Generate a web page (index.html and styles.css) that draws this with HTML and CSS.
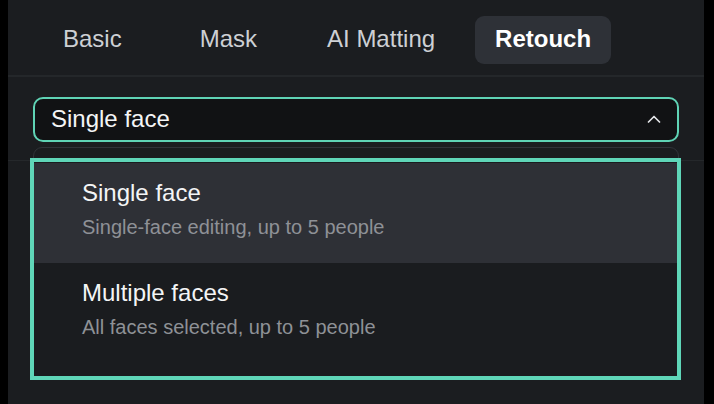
FILE: index.html
```html
<!DOCTYPE html>
<html>
<head>
<meta charset="utf-8">
<link rel="stylesheet" href="styles.css">
</head>
<body>
<div class="panel">
  <div class="tabs">
    <div class="tab tab-basic">Basic</div>
    <div class="tab tab-mask">Mask</div>
    <div class="tab tab-matting">AI Matting</div>
    <div class="tab active">Retouch</div>
  </div>
  <div class="select-area">
    <div class="select">
      <span class="select-value">Single face</span>
      <svg class="chevron" width="14" height="8" viewBox="0 0 14 8"><path d="M1.5 7 L7 1.5 L12.5 7" fill="none" stroke="#e2e4e7" stroke-width="1.7" stroke-linecap="round" stroke-linejoin="round"/></svg>
    </div>
  </div>
  <div class="popup">
    <div class="list">
      <div class="item selected">
        <div class="item-title">Single face</div>
        <div class="item-sub">Single-face editing, up to 5 people</div>
      </div>
      <div class="item">
        <div class="item-title">Multiple faces</div>
        <div class="item-sub">All faces selected, up to 5 people</div>
      </div>
    </div>
  </div>
</div>
</body>
</html>
```
FILE: styles.css
```css
html, body {
  margin: 0;
  padding: 0;
  background: #000;
}
body {
  font-family: "Liberation Sans", Arial, sans-serif;
  width: 714px;
  height: 404px;
  overflow: hidden;
}
.panel {
  position: relative;
  margin-left: 8px;
  width: 696px;
  height: 404px;
  background: #1b1d20;
}
.tabs {
  display: flex;
  align-items: flex-start;
  height: 59px;
  padding: 16px 0 0 35px;
  border-bottom: 2px solid #24272a;
}
.tab {
  height: 48px;
  padding: 0 20px;
  display: flex;
  align-items: center;
  font-size: 24px;
  color: #cdd0d4;
  border-radius: 9px;
  padding-bottom: 2px;
  box-sizing: border-box;
}
.tab-basic { margin-right: 38px; }
.tab-mask { margin-right: 30px; }
.tab-matting { margin-right: 20px; }
.tab.active {
  background: #2e3137;
  color: #ffffff;
  font-weight: bold;
}
.select-area {
  padding: 20px 25px 18px 25px;
  border-bottom: 1px solid #25282b;
}
.select {
  height: 45px;
  box-sizing: border-box;
  border: 2px solid #5fd3b5;
  border-radius: 10px;
  background: #111214;
  display: flex;
  align-items: center;
  justify-content: space-between;
  padding: 0 16px 0 16px;
}
.select-value {
  font-size: 24px;
  color: #f4f5f6;
  padding-bottom: 2px;
}
.chevron {
  display: block;
  margin-top: -2px;
}
.popup {
  position: absolute;
  top: 147px;
  left: 25px;
  right: 25px;
  bottom: 24px;
  padding-top: 11px;
  border: 1px solid #303338;
  border-radius: 9px;
  background: #1a1c1f;
}
.list {
  margin: -1px -3px 0 -4px;
  border: 4px solid #5fd6b8;
  padding: 1px 0 13px 0;
  background: #1a1c1f;
}
.item {
  padding: 16px 48px 24px 48px;
}
.item.selected {
  background: #2e3036;
}
.item-title {
  font-size: 24px;
  line-height: 28px;
  color: #f4f5f6;
}
.item-sub {
  margin-top: 8px;
  font-size: 20px;
  line-height: 24px;
  color: #8e9196;
}
```
